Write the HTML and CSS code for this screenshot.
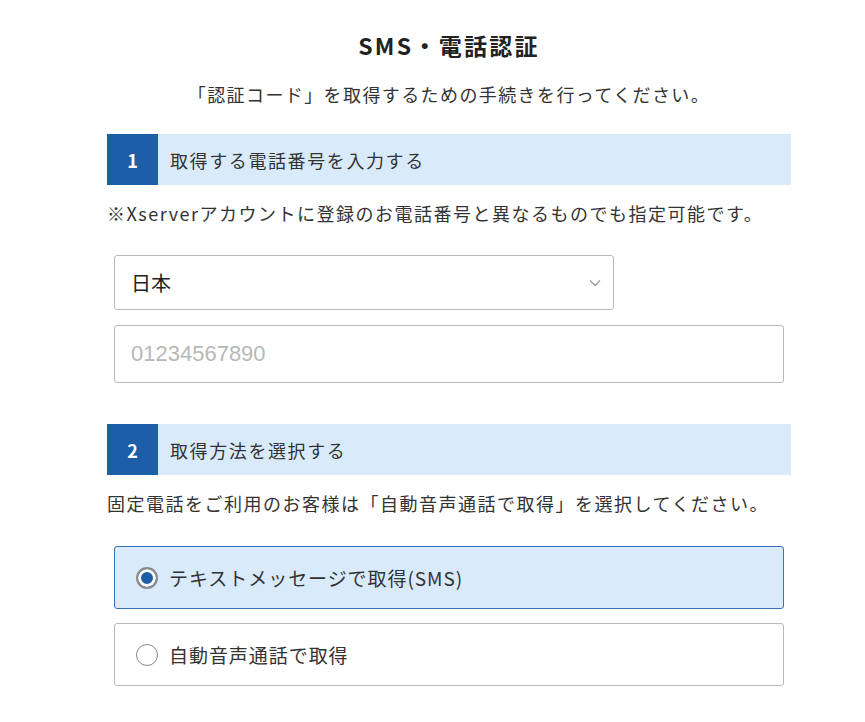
FILE: index.html
```html
<!DOCTYPE html>
<html lang="ja">
<head>
<meta charset="UTF-8">
<title>SMS・電話認証</title>
<link rel="stylesheet" href="styles.css">
</head>
<body>
    <main id="verify" class="verify">
        <h1 class="verify-title">SMS・電話認証</h1>
        <p class="verify-lead">「認証コード」を取得するための手続きを行ってください。</p>

        <section class="step">
            <h2 class="step-head"><span class="step-num">1</span><span class="step-label">取得する電話番号を入力する</span></h2>
            <p class="step-note">※Xserverアカウントに登録のお電話番号と異なるものでも指定可能です。</p>
            <div class="step-fields">
                <div class="select-box">
                    <span class="select-value">日本</span>
                    <svg class="select-arrow" width="12" height="8" viewBox="0 0 12 8"><path d="M1 1.5 6 6.5 11 1.5" fill="none" stroke="#9a9a9a" stroke-width="1.3"/></svg>
                </div>
                <input type="tel" class="tel-input" placeholder="01234567890">
            </div>
        </section>

        <section class="step step-second">
            <h2 class="step-head"><span class="step-num">2</span><span class="step-label">取得方法を選択する</span></h2>
            <p class="step-note">固定電話をご利用のお客様は「自動音声通話で取得」を選択してください。</p>
            <div class="step-fields options">
                <label class="option selected"><span class="radio"></span>テキストメッセージで取得(SMS)</label>
                <label class="option"><span class="radio"></span>自動音声通話で取得</label>
            </div>
        </section>
    </main>
</body>
</html>
```

FILE: styles.css
```css
* {
margin: 0;
padding: 0;
box-sizing: border-box;
}

html, body {
background-color: #ffffff;
font-family: "Noto Sans CJK JP", "Noto Sans", sans-serif;
color: #333333;
}

.verify {
width: 684px;
margin-left: 107px;
padding-top: 30px;
}

.verify-title {
font-size: 23px;
line-height: 30px;
font-weight: bold;
text-align: center;
letter-spacing: 0.1em;
color: #222222;
}

.verify-lead {
margin-top: 20px;
font-size: 18px;
line-height: 28px;
text-align: center;
letter-spacing: 1.4px;
}

.step {
margin-top: 26px;
}

.step-second {
margin-top: 41px;
}

.step-head {
display: flex;
height: 51px;
align-items: center;
background-color: #d9ebfb;
font-weight: normal;
font-size: 18px;
}

.step-num {
display: flex;
width: 51px;
height: 100%;
align-items: center;
justify-content: center;
background-color: #1d5fa6;
color: #ffffff;
font-weight: bold;
font-size: 18px;
}

.step-label {
margin-left: 12px;
letter-spacing: 1.6px;
}

.step-note {
margin-top: 14px;
font-size: 18px;
line-height: 28px;
letter-spacing: 1.5px;
}

.step-fields {
display: flex;
flex-direction: column;
gap: 15px;
padding: 0 7px;
margin-top: 28px;
}

.select-box {
display: flex;
width: 500px;
height: 55px;
align-items: center;
justify-content: space-between;
padding: 0 12px 0 16px;
border: solid 1px #b9b9b9;
border-radius: 3px;
font-size: 20px;
color: #222222;
}

.tel-input {
height: 58px;
padding: 0 16px;
border: solid 1px #b9b9b9;
border-radius: 3px;
font-family: "Liberation Sans", Arial, sans-serif;
font-size: 22px;
color: #333333;
}

.tel-input::placeholder {
color: #b8b8b8;
}

.options {
margin-top: 29px;
gap: 14px;
}

.option {
display: flex;
height: 63px;
align-items: center;
padding-left: 21px;
border: solid 1px #b9b9b9;
border-radius: 3px;
font-size: 19px;
letter-spacing: 0.05em;
}

.option.selected {
background-color: #d9ebfb;
border-color: #3a72b8;
}

.radio {
width: 22px;
height: 22px;
margin-right: 11px;
border: solid 1.5px #8a8a8a;
border-radius: 50%;
background-color: #ffffff;
}

.option.selected .radio {
border-width: 2px;
background-color: #1d5fa6;
box-shadow: inset 0 0 0 3px #ffffff;
}
```
